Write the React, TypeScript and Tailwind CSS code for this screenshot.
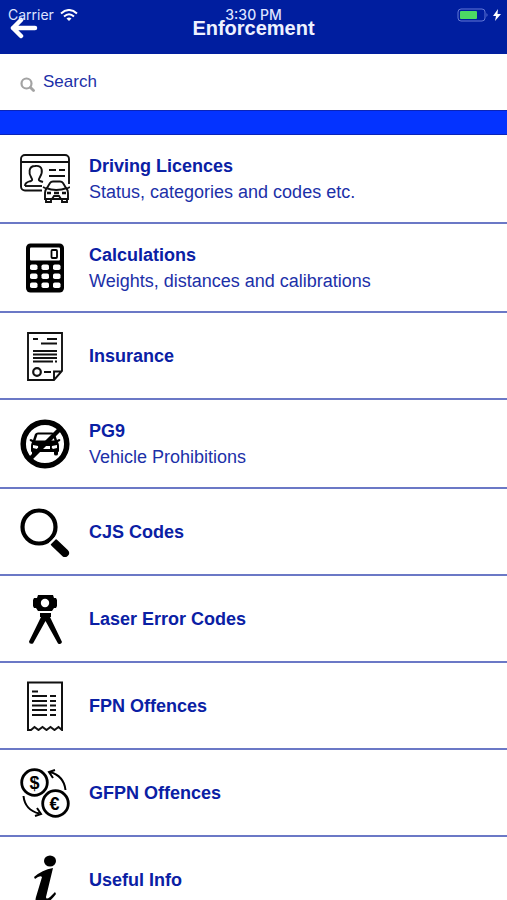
import type { ReactNode } from "react";

type MenuItem = {
  title: string;
  subtitle?: string;
  icon: ReactNode;
};

function LicenceIcon() {
  return (
    <svg viewBox="0 0 50 50" className="size-full" fill="none" stroke="#111" strokeWidth="1.9" aria-hidden>
      <path d="M22 36.5H5a4 4 0 0 1-4-4V5a4 4 0 0 1 4-4h40a4 4 0 0 1 4 4v25" />
      <path d="M1 8h48M29 16h7M39 16h6M29 22h16" />
      <path d="M5 32c0-4 3-4 6-5 2-1 1-2 0-4-2-3-3-11 4-11 8-1 8 6 5 11-1 2-2 3 0 4l3 1" />
      <path d="M5 32h17" />
      <path d="M27 34l3-5q1-1.500 3-1.500h7q2 0 3 1.500l3 5M23 33l4 2M50 33l-4 2" />
      <path d="M26 34q10 4 21 0M27 34q-2 2-2 5v6h23v-6q0-3-2-5" />
      <path d="M26 45v3h5v-3M42 45v3h5v-3M32 45l2-3h5l2 3" />
      <path d="M27 39h4M42 39h4M34 39h5" strokeWidth="2.400" />
    </svg>
  );
}

function CalculatorIcon() {
  return (
    <svg viewBox="0 0 50 50" className="size-full" aria-hidden>
      <rect x="6" y="0.500" width="38" height="49" rx="4.500" />
      <rect x="10" y="4.500" width="30" height="13" rx="1" fill="#fff" />
      <rect x="31.500" y="7" width="5.500" height="8" rx="1" fill="none" stroke="#000" strokeWidth="1.800" />
      {[21.5, 30.5, 39.5].map((y) =>
        [10, 21.5, 33].map((x) => (
          <rect key={`${x}-${y}`} x={x} y={y} width="7.5" height="5.5" rx="1.8" fill="#fff" />
        )),
      )}
    </svg>
  );
}

function InsuranceIcon() {
  return (
    <svg viewBox="0 0 50 50" className="size-full" fill="none" stroke="#111" strokeWidth="1.9" aria-hidden>
      <path d="M8 2h34v38l-8 9H8zM34 49v-8.500h8" />
      <path d="M13 8h5M27 8h10M21 12.500h16M13 20h24M13 23.500h24M13 27h24M13 30.500h20M35 30.500h2M24 41h7" />
      <circle cx="17" cy="41" r="3.8" strokeWidth="2.2" />
    </svg>
  );
}

function ProhibitionIcon() {
  return (
    <svg viewBox="0 0 50 50" className="size-full" aria-hidden>
      <path d="M15 15q1-1.500 3-1.500h14q2 0 3 1.500l2 6 2-1q2 0 1 2l-2 1q1 2 1 4v5q0 1-1 1v2q0 1.500-2 1.500t-2-1.500v-2H16v2q0 1.500-2 1.500T12 35v-2q-1 0-1-1v-5q0-2 1-4l-2-1q-1-2 1-2l2 1z" />
      <path d="M17.500 15.500h15l2 6h-19z" fill="#fff" />
      <path d="M13 26l5 1q1 2-1 3l-4-1zM37 26l-5 1q-1 2 1 3l4-1zM20 27h10v3H20z" fill="#fff" />
      <path d="M10 40L40 10" stroke="#000" strokeWidth="4.500" />
      <circle cx="25" cy="25" r="21.800" fill="none" stroke="#000" strokeWidth="5.500" />
    </svg>
  );
}

function MagnifierIcon() {
  return (
    <svg viewBox="0 0 50 50" className="size-full" fill="none" stroke="#000" aria-hidden>
      <circle cx="19" cy="20" r="16.500" strokeWidth="4.200" />
      <path d="M34.500 36L45 46" strokeWidth="8" strokeLinecap="round" />
      <path d="M29.500 37l7-7" stroke="#fff" strokeWidth="2.400" />
    </svg>
  );
}

function TripodIcon() {
  return (
    <svg viewBox="0 0 50 50" className="size-full" aria-hidden>
      <path d="M18 1h15l1 3h2l1 2v6l-1 2h-2l-2 3H18l-2-3h-2l-1-2V6l1-2h3z" />
      <circle cx="25" cy="9" r="4.2" fill="#fff" />
      <path d="M20 19h11v4h-1L42 48q-1 3-4 1.500L25.500 27 13 49.500q-4 1-4-2L21 23h-1z" />
    </svg>
  );
}

function ReceiptIcon() {
  return (
    <svg viewBox="0 0 50 50" className="size-full" fill="none" stroke="#111" strokeWidth="2" aria-hidden>
      <path d="M8 49V1.500h34V49l-3.500-3-4 3-4-3-4 3-4-3-4 3-4-3-3.500 3z" />
      <path d="M12 10.500h6M12 15h15M30 15h6M12 20h15M30 20h6M12 24.500h15M30 24.500h6M12 29h15M30 29h6M12 34h15M30 34h6" />
    </svg>
  );
}

function CurrencyIcon() {
  return (
    <svg viewBox="0 0 50 50" className="size-full" fill="none" stroke="#000" strokeWidth="2" aria-hidden>
      <circle cx="14.500" cy="14.500" r="12.800" strokeWidth="2.800" />
      <circle cx="35.500" cy="35.500" r="12.800" strokeWidth="2.800" />
      <path d="M45.500 22Q44 8 30 4M35 2l-6 2 4 6M3.500 28Q5 42 19 45.500M17 40l4 6-6 2" />
      <g fill="#000" stroke="none" textAnchor="middle" className="font-['Liberation_Sans',Arial,sans-serif] font-bold">
        <text x="14.500" y="21" fontSize="18">$</text>
        <text x="34.500" y="42" fontSize="18">€</text>
      </g>
    </svg>
  );
}

function InfoIcon() {
  return (
    <svg viewBox="0 0 50 50" className="size-full" aria-hidden>
      <ellipse cx="30" cy="6" rx="6" ry="5.500" />
      <path d="M14 22q8-7 19-9l-7 29q0 3 4 0l5-5 1 2q-8 11-16 11-6 0-4-8l6-20q-2-2-7 2z" />
    </svg>
  );
}

const items: MenuItem[] = [
  { title: "Driving Licences", subtitle: "Status, categories and codes etc.", icon: <LicenceIcon /> },
  { title: "Calculations", subtitle: "Weights, distances and calibrations", icon: <CalculatorIcon /> },
  { title: "Insurance", icon: <InsuranceIcon /> },
  { title: "PG9", subtitle: "Vehicle Prohibitions", icon: <ProhibitionIcon /> },
  { title: "CJS Codes", icon: <MagnifierIcon /> },
  { title: "Laser Error Codes", icon: <TripodIcon /> },
  { title: "FPN Offences", icon: <ReceiptIcon /> },
  { title: "GFPN Offences", icon: <CurrencyIcon /> },
  { title: "Useful Info", icon: <InfoIcon /> },
];

function StatusBar() {
  return (
    <div className="pointer-events-none absolute inset-x-0 top-1 grid h-5 grid-cols-[1fr_auto_1fr] items-center px-1.5 font-[Inter,sans-serif] text-[14px] text-[#dde3ff]">
      <div className="flex items-center gap-1.5 pl-0.5">
        <span>Carrier</span>
        <svg viewBox="0 0 18 12" className="h-3 w-[18px]" fill="none" stroke="#fff" strokeWidth="2" aria-hidden>
          <path d="M1 4.500q8-7 16 0M4 7.500q5-4.500 10 0" />
          <path d="M6.500 9.500q2.500-2 5 0L9 12z" fill="#fff" stroke="none" />
        </svg>
      </div>
      <span className="font-medium">3:30 PM</span>
      <div className="flex items-center justify-end gap-1">
        <svg viewBox="0 0 32 14" className="h-3.5 w-8" aria-hidden>
          <rect x="1" y="1" width="27" height="12" rx="3" fill="none" stroke="#6377d6" />
          <rect x="3" y="3" width="17" height="8" rx="1" fill="#4cd964" />
          <path d="M29.500 5q2 2 0 4z" fill="#6377d6" />
        </svg>
        <svg viewBox="0 0 8 12" className="h-3 w-2" fill="#fff" aria-hidden>
          <path d="M5 0L0 7h3L2 12l6-7H4.500z" />
        </svg>
      </div>
    </div>
  );
}

function MenuRow({ item }: { item: MenuItem }) {
  return (
    <li className="border-b-2 border-[#6b78c6]">
      <a href="#" className="flex items-center gap-[19px] px-5">
        <span className="my-[17px] size-[50px] shrink-0">{item.icon}</span>
        <span className={item.subtitle ? "flex h-[87px] flex-col justify-center" : "flex h-[85px] flex-col justify-center"}>
          <span className="text-[18px] leading-[26px] font-bold text-[#0a20a4]">{item.title}</span>
          {item.subtitle ? (
            <span className="text-[18px] leading-[26px] text-[#1c30a8]">{item.subtitle}</span>
          ) : null}
        </span>
      </a>
    </li>
  );
}

export default function App() {
  return (
    <div className="h-screen overflow-hidden bg-white font-['Liberation_Sans',Arial,sans-serif]">
      <header className="relative flex h-[54px] items-end justify-center bg-[#001e9f] pb-3">
        <h1 className="text-xl leading-7 font-bold text-[#eef1ff]">Enforcement</h1>
        <button type="button" aria-label="Back" className="absolute top-[17px] left-2.5">
          <svg viewBox="0 0 28 22" className="h-[22px] w-7" fill="none" stroke="#fff" strokeWidth="4.500" strokeLinecap="round" strokeLinejoin="round" aria-hidden>
            <path d="M11 3L3 11l8 8M3 11h22" />
          </svg>
        </button>
        <StatusBar />
      </header>

      <label className="flex h-14 items-center gap-2 px-5">
        <svg viewBox="0 0 15 15" className="mt-1 size-[15px]" fill="none" stroke="#a3a3a3" strokeWidth="2.200" strokeLinecap="round" aria-hidden>
          <circle cx="6.500" cy="6.500" r="5" />
          <path d="M10.500 10.500l3 3" strokeWidth="2.800" />
        </svg>
        <input
          type="text"
          aria-label="Search"
          placeholder="Search"
          className="min-w-0 flex-1 bg-transparent text-[17px] text-[#1c30a8] outline-none placeholder:text-[#1c30a8]"
        />
      </label>

      <div className="h-[25px] border-y border-[#0a24b8] bg-[#0433ff]" />

      <ul>
        {items.map((item) => (
          <MenuRow key={item.title} item={item} />
        ))}
      </ul>
    </div>
  );
}
